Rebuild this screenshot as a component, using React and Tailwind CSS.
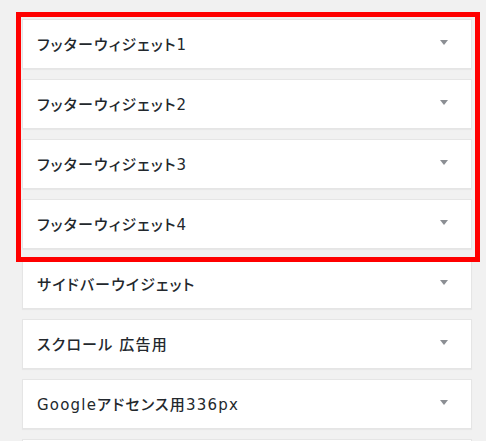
import React from 'react';

const widgets = [
  'フッターウィジェット1',
  'フッターウィジェット2',
  'フッターウィジェット3',
  'フッターウィジェット4',
  'サイドバーウイジェット',
  'スクロール 広告用',
  'Googleアドセンス用336px',
  'Googleアドセンス用300px',
];

const Arrow = () => (
  <svg width="8" height="5" viewBox="0 0 8 5" className="-mt-[4px]">
    <polygon points="0,0 8,0 4,5" fill="#8c8f94" />
  </svg>
);

const WidgetArea = ({ title }) => (
  <div className="h-[50px] shrink-0 bg-white border border-[#e5e5e5] shadow-[0_1px_1px_rgba(0,0,0,0.04)] flex items-center justify-between pl-[14px] pr-[23px]">
    <h3 className="pt-[3px] text-[15px] font-medium text-[#23282d] leading-none tracking-[1.2px] [font-feature-settings:'palt']">
      {title}
    </h3>
    <Arrow />
  </div>
);

export default function App() {
  return (
    <div
      className="relative w-[486px] h-[441px] overflow-hidden bg-[#f1f1f1]"
      style={{ fontFamily: '"DejaVu Sans", "Noto Sans CJK JP", sans-serif' }}
    >
      <div className="flex flex-col gap-[10px] pt-[19px] pl-[22px] w-[472px]">
        {widgets.map((w) => (
          <WidgetArea key={w} title={w} />
        ))}
      </div>

      {/* highlight frame drawn over the first four areas */}
      <div className="absolute left-[16px] top-[12px] w-[464px] h-[250px] border-[5px] border-[#ff0000] pointer-events-none" />
    </div>
  );
}
